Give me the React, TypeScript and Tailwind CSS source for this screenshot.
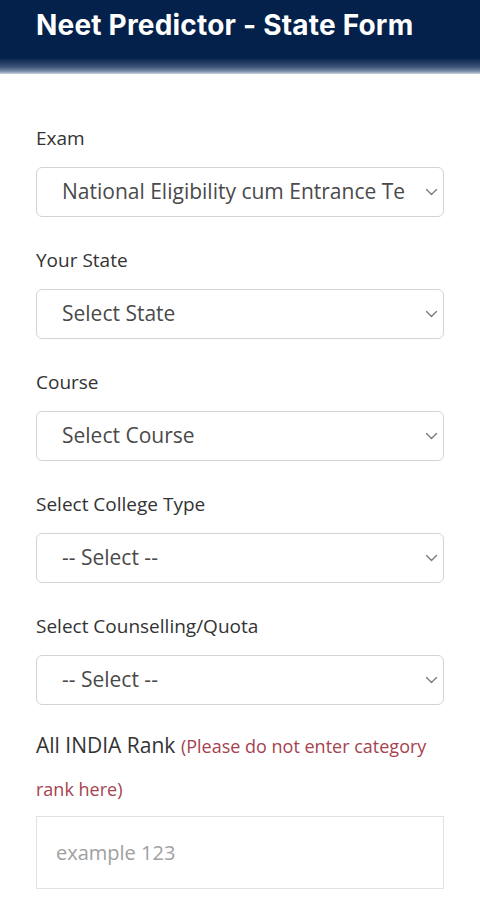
const fields = [
  { label: "Exam", value: "National Eligibility cum Entrance Test (NEET UG)" },
  { label: "Your State", value: "Select State" },
  { label: "Course", value: "Select Course" },
  { label: "Select College Type", value: "-- Select --" },
  { label: "Select Counselling/Quota", value: "-- Select --" },
];

function Chevron() {
  return (
    <svg
      className="w-[13px] h-[8px] shrink-0"
      viewBox="0 0 13 8"
      fill="none"
      stroke="#7a7a7a"
      strokeWidth={1.4}
      strokeLinecap="round"
      strokeLinejoin="round"
    >
      <path d="M1.5 1.5l5 5 5-5" />
    </svg>
  );
}

export default function App() {
  return (
    <div className="w-full min-h-[900px] bg-white font-['Open_Sans',sans-serif]">
      {/* Header */}
      <header className="h-[74px] bg-[linear-gradient(180deg,#03214a_0%,#03214a_78%,#3a5275_90%,#7488a4_96%,#c9d2de_100%)] pl-[36px] pt-[5px]">
        <h1 className="font-['Inter',sans-serif] font-bold text-[28px] leading-[40px] text-white tracking-[0.2px]">
          Neet Predictor - State Form
        </h1>
      </header>

      <main className="px-[36px] pt-[50px]">
        {fields.map((f) => (
          <div key={f.label} className="mb-[29px]">
            <label className="block text-[19px] leading-[28px] text-[#333]">
              {f.label}
            </label>
            <div className="mt-[15px] h-[50px] flex items-center border border-[#d3d3d3] rounded-[6px] pl-[25px] pr-[5px] bg-white">
              <span className="flex-1 min-w-0 overflow-hidden whitespace-nowrap text-[21px] text-[#4a4a4a] mr-[20px]">
                {f.value}
              </span>
              <Chevron />
            </div>
          </div>
        ))}

        <div className="-mt-[10px]">
          <label className="block text-[21px] leading-[42px] text-[#333]">
            All INDIA Rank{" "}
            <span className="text-[18px] text-[#a6434f]">
              (Please do not enter category rank here)
            </span>
          </label>
          <div className="mt-[6px] h-[73px] flex items-center border border-[#e2e2e2] pl-[19px] text-[20px] text-[#a0a0a0]">
            example 123
          </div>
        </div>
      </main>
    </div>
  );
}
